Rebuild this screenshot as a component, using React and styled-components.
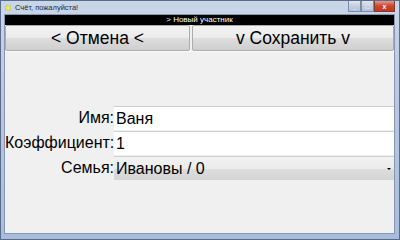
import styled, { createGlobalStyle } from "styled-components";

const Global = createGlobalStyle`
  html, body { margin: 0; padding: 0; }
  body { width: 400px; height: 240px; overflow: hidden; font-family: "Liberation Sans", Arial, sans-serif; }
`;

const Window = styled.div`
  width: 400px;
  height: 240px;
  box-sizing: border-box;
  display: flex;
  flex-direction: column;
  background: linear-gradient(#c9d6e8, #b8c9e0 40%, #a9bddb);
  border: 1px solid #5a6b8c;
  padding: 0 4px 5px 3px;
`;

const TitleBar = styled.div`
  height: 13px;
  display: flex;
  align-items: center;
  gap: 4px;
  padding-left: 1px;
`;

const AppIcon = styled.div`
  width: 6px;
  height: 6px;
  border-radius: 2px;
  background: radial-gradient(#f4f29a, #b8c23a);
`;

const Title = styled.span`
  flex: 1;
  font-size: 7.5px;
  color: #1e2a3c;
`;

const Controls = styled.div`
  display: flex;
  align-self: flex-start;
  margin-right: 0px;
`;

const Ctl = styled.div`
  width: ${(p) => p.$w}px;
  height: 11px;
  box-sizing: border-box;
  border: 1px solid ${(p) => (p.$close ? "#8a3a2c" : "#7a8aa8")};
  border-top: none;
  background: ${(p) =>
    p.$close
      ? "linear-gradient(#e09a8a, #c9452e 50%, #c23a22)"
      : "linear-gradient(#dfe6f0, #c3cfe0 50%, #b3c2d8)"};
  display: flex;
  align-items: center;
  justify-content: center;
  color: #fff;
  font-size: 7px;
  font-weight: bold;
`;

const Client = styled.div`
  flex: 1;
  display: flex;
  flex-direction: column;
  background: #f0f0f0;
  border: 1px solid #8796b2;
`;

const Status = styled.div`
  height: 10px;
  background: #000;
  color: #fff;
  font-size: 8px;
  line-height: 10px;
  text-align: center;
`;

const ButtonRow = styled.div`
  display: grid;
  grid-template-columns: 185px 1fr;
  gap: 2px;
  border-bottom: 1px solid #fafafa;
`;

const Button = styled.button`
  height: 26px;
  margin: 0;
  padding: 0;
  border: 1px solid #acacac;
  border-radius: 2px;
  background: linear-gradient(#f2f2f2 0%, #ebebeb 50%, #dddddd 51%, #cfcfcf 100%);
  font-family: "Liberation Sans", Arial, sans-serif;
  font-size: 17.5px;
  color: #000;
`;

const Form = styled.div`
  margin-top: 54px;
  display: grid;
  grid-template-columns: 109px 1fr;
  row-gap: 1px;
  align-items: stretch;
`;

const Label = styled.label`
  font-size: 16px;
  text-align: right;
  line-height: 24px;
  color: #000;
`;

const Field = styled.div`
  height: 24px;
  box-sizing: border-box;
  border-top: 1px solid #cdcdd3;
  background: ${(p) => (p.$select ? "linear-gradient(#f2f2f2, #ebebeb 50%, #dddddd 51%, #d4d4d4)" : "#fff")};
  font-size: 16px;
  line-height: 23px;
  padding-left: 2px;
  display: flex;
  justify-content: space-between;
  align-items: center;
`;

const Arrow = styled.span`
  width: 0;
  height: 0;
  border-left: 2px solid transparent;
  border-right: 2px solid transparent;
  border-top: 2px solid #000;
  margin-right: 3px;
`;

export default function App() {
  return (
    <>
      <Global />
      <Window>
        <TitleBar>
          <AppIcon />
          <Title>Счёт, пожалуйста!</Title>
          <Controls>
            <Ctl $w={13}>_</Ctl>
            <Ctl $w={13}>□</Ctl>
            <Ctl $w={21} $close>x</Ctl>
          </Controls>
        </TitleBar>
        <Client>
          <Status>&gt; Новый участник</Status>
          <ButtonRow>
            <Button>&lt; Отмена &lt;</Button>
            <Button>v Сохранить v</Button>
          </ButtonRow>
          <Form>
            <Label>Имя:</Label>
            <Field>Ваня</Field>
            <Label>Коэффициент:</Label>
            <Field>1</Field>
            <Label>Семья:</Label>
            <Field $select>
              Ивановы / 0
              <Arrow />
            </Field>
          </Form>
        </Client>
      </Window>
    </>
  );
}
